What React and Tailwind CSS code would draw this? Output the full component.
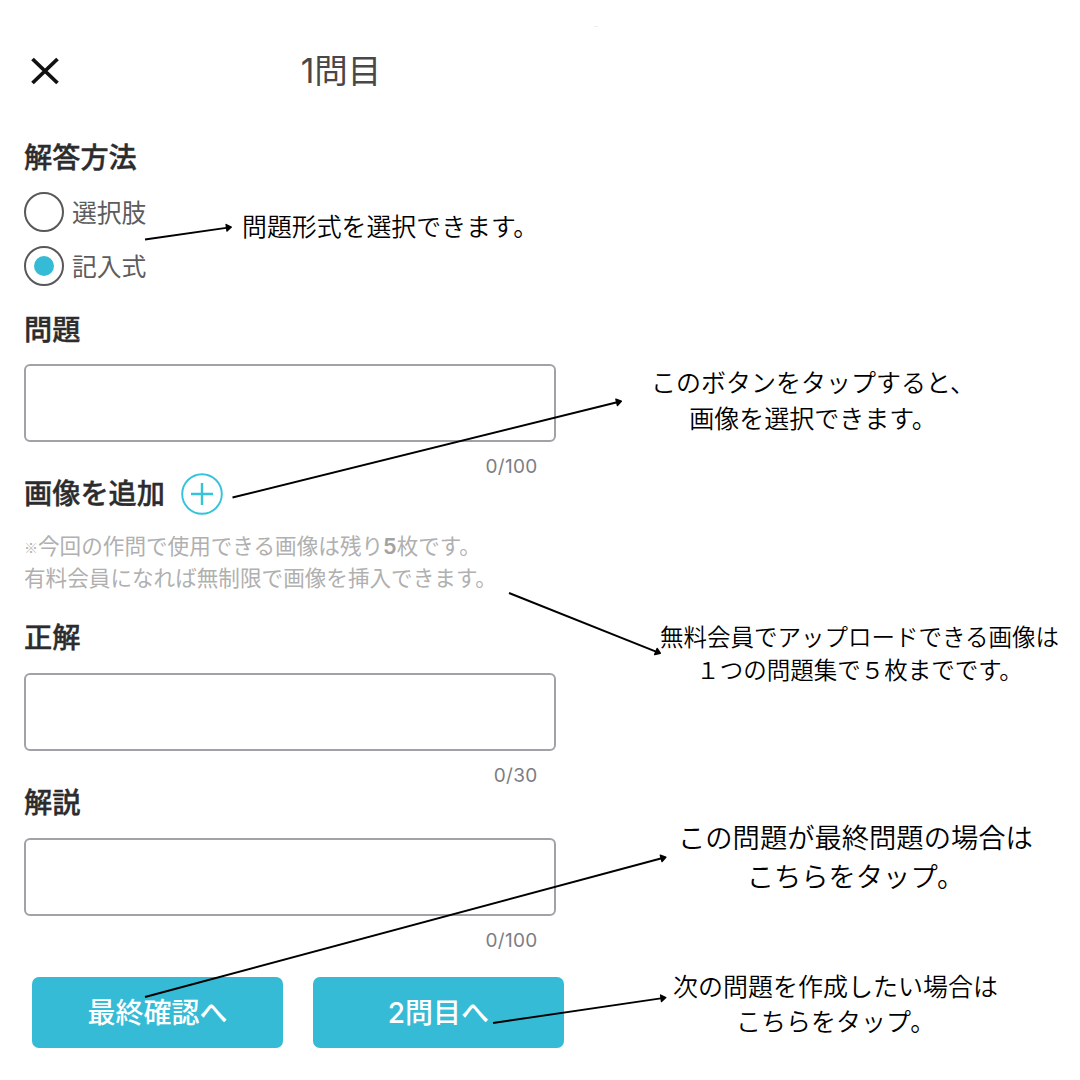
function Heading({ children }) {
  return (
    <h2 className="h-[40px] text-[28.2px] leading-[40px] font-medium text-[#2c2c2e] whitespace-nowrap [-webkit-text-stroke:0.4px_#2c2c2e]">
      {children}
    </h2>
  );
}

function Radio({ label, checked }) {
  return (
    <div className="flex h-[40px] items-center gap-[8px]">
      <span className="flex size-[40px] items-center justify-center rounded-full border-2 border-[#58585a]">
        {checked && <span className="size-[20px] rounded-full bg-[#35bbd5]" />}
      </span>
      <span className="pt-[2px] text-[24.8px] leading-[38px] text-[#5c5c5e]">{label}</span>
    </div>
  );
}

function Field({ count }) {
  return (
    <div className="w-[532px]">
      <div className="h-[78px] rounded-[6px] border-2 border-[#a2a1a8]" />
      <div className="mt-[11px] pr-[18.5px] text-right text-[19px] leading-[28px] tracking-[0.3px] text-[#7d7d83]">
        {count}
      </div>
    </div>
  );
}

function ActionButton({ children }) {
  return (
    <button className="h-[71px] w-[251px] rounded-[7px] bg-[#35bbd5] pt-px text-[28px] leading-none font-medium text-white">
      {children}
    </button>
  );
}

function Note({ className, lines }) {
  return (
    <div className={`absolute text-center font-[350] whitespace-nowrap text-black ${className}`}>
      {lines.map((line) => (
        <p key={line}>{line}</p>
      ))}
    </div>
  );
}

const arrows = [
  [145, 239.5, 232, 227],
  [232.5, 497.5, 622, 401],
  [509, 593, 661, 653.5],
  [145, 997, 666.5, 857],
  [493, 1023, 666.5, 997.5],
];

function Arrows() {
  return (
    <svg className="pointer-events-none absolute inset-0" width="1080" height="1080" viewBox="0 0 1080 1080">
      {arrows.map(([x1, y1, x2, y2]) => {
        const length = Math.hypot(x2 - x1, y2 - y1);
        const angle = (Math.atan2(y2 - y1, x2 - x1) * 180) / Math.PI;
        return (
          <g key={`${x1}-${y1}`} transform={`translate(${x1} ${y1}) rotate(${angle})`}>
            <line x1="0" y1="0" x2={length - 4} y2="0" stroke="#000" strokeWidth="1.9" />
            <path
              d={`M${length - 5.5} -3.3 L${length - 0.7} 0 L${length - 5.5} 3.3 Z`}
              stroke="#000"
              strokeWidth="1.4"
              strokeLinejoin="round"
            />
          </g>
        );
      })}
    </svg>
  );
}

export default function App() {
  return (
    <div className="relative h-[1080px] w-[1080px] overflow-hidden bg-white font-['Inter','Noto_Sans_CJK_JP',sans-serif]">
      <main className="flex w-[682px] flex-col pl-[24px]">
        <header className="mt-[46px] -ml-[24px] grid h-[50px] grid-cols-[1fr_auto_1fr] items-center">
          <svg className="-mt-px ml-[31px]" width="28" height="28" viewBox="0 0 28 28">
            <path d="M1.5 2 L26.5 26 M26.5 2 L1.5 26" stroke="#111" strokeWidth="3.8" fill="none" />
          </svg>
          <h1 className="text-[33.5px] leading-[50px] text-[#48484a]">1問目</h1>
        </header>

        <section className="mt-[42px]">
          <Heading>解答方法</Heading>
          <div className="mt-[14px] flex flex-col gap-[14px]">
            <Radio label="選択肢" />
            <Radio label="記入式" checked />
          </div>
        </section>

        <section className="mt-[24px]">
          <Heading>問題</Heading>
          <div className="mt-[14px]">
            <Field count="0/100" />
          </div>
        </section>

        <section className="-mt-[8px]">
          <div className="flex h-[42px] items-center gap-[16px]">
            <Heading>画像を追加</Heading>
            <svg className="-mt-px" width="42" height="42" viewBox="0 0 42 42" fill="none" stroke="#35c3d9">
              <circle cx="21" cy="21" r="19.8" strokeWidth="1.9" />
              <path d="M10 21 H32 M21 10 V32" strokeWidth="2.4" />
            </svg>
          </div>
          <div className="mt-[15px] text-[21.6px] whitespace-nowrap text-[#b0b0b0]">
            <p className="flex h-[32px] items-center">
              <span className="w-[14px] pt-[3px] font-['Noto_Sans_CJK_JP'] text-[14px] leading-[29px] font-bold">
                ※
              </span>
              <span className="leading-[32px]">今回の作問で使用できる画像は残り</span>
              <b className="leading-[32px] font-semibold text-[#a2a2a2]">5</b>
              <span className="leading-[32px]">枚です。</span>
            </p>
            <p className="h-[33px] leading-[33px]">有料会員になれば無制限で画像を挿入できます。</p>
          </div>
        </section>

        <section className="mt-[23px]">
          <Heading>正解</Heading>
          <div className="mt-[14.5px]">
            <Field count="0/30" />
          </div>
        </section>

        <section className="-mt-[6.5px]">
          <Heading>解説</Heading>
          <div className="mt-[14.5px]">
            <Field count="0/100" />
          </div>
        </section>

        <div className="mt-[22.5px] ml-[8px] flex gap-[30px]">
          <ActionButton>最終確認へ</ActionButton>
          <ActionButton>2問目へ</ActionButton>
        </div>
      </main>

      <Arrows />
      <Note className="top-[209px] left-[242px] text-[24.9px] leading-[36px]" lines={["問題形式を選択できます。"]} />
      <Note
        className="top-[365px] left-[651px] text-[25px] leading-[36px]"
        lines={["このボタンをタップすると、", "画像を選択できます。"]}
      />
      <Note
        className="top-[621px] left-[660px] text-[23.5px] leading-[33px]"
        lines={["無料会員でアップロードできる画像は", "１つの問題集で５枚までです。"]}
      />
      <Note
        className="top-[819px] left-[678px] text-[27.3px] leading-[39px]"
        lines={["この問題が最終問題の場合は", "こちらをタップ。"]}
      />
      <Note
        className="top-[970px] left-[673px] text-[25px] leading-[35px]"
        lines={["次の問題を作成したい場合は", "こちらをタップ。"]}
      />
      <div className="absolute top-[26px] left-[594px] h-px w-[4px] bg-[#eeeeee]" />
    </div>
  );
}
